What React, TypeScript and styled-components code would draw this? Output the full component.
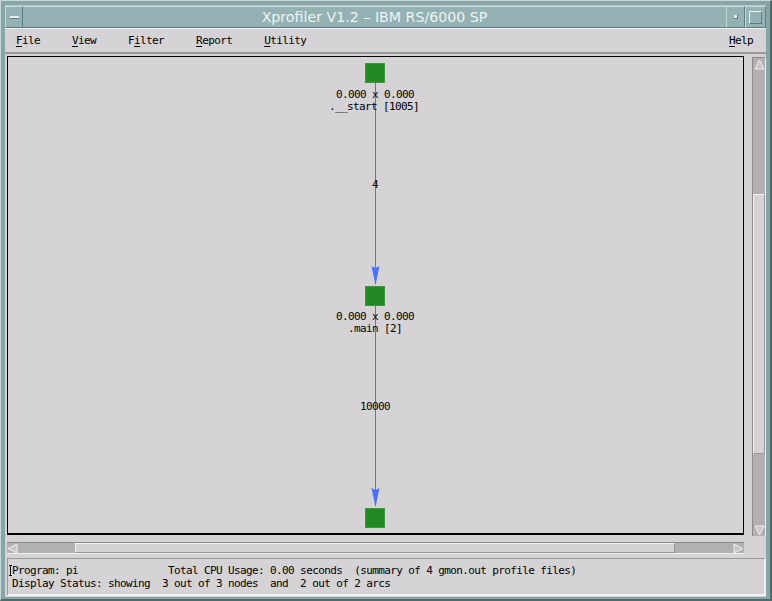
import React from "react";
import styled, { createGlobalStyle } from "styled-components";

const GlobalStyle = createGlobalStyle`
  html, body { margin: 0; padding: 0; background: #5d7b7c; }
  #root { width: 772px; height: 601px; }
`;

const BG = "#d6d3d6";
const DARK = "#b3b0b3";
const EDGE = "#4a70ff";
const MONO = `"DejaVu Sans Mono", "Liberation Mono", monospace`;

const Frame = styled.div`
  width: 772px;
  height: 601px;
  box-sizing: border-box;
  padding: 4px 4px 5px 4px;
  background: #87a5a6;
  border-top: 1px solid #c8d8d8;
  border-left: 1px solid #c8d8d8;
  border-right: 2px solid #4f6b6c;
  border-bottom: 2px solid #4f6b6c;
  display: flex;
  flex-direction: column;
  overflow: hidden;
`;

const TitleBar = styled.div`
  height: 23px;
  flex: none;
  display: flex;
  align-items: stretch;
  background: #94b2b3;
  border-top: 1px solid #b8cccc;
  box-sizing: border-box;
`;

const WinButton = styled.div<{ $w: number }>`
  width: ${(p) => p.$w}px;
  flex: none;
  box-sizing: border-box;
  border-top: 1px solid #c4d6d6;
  border-left: 1px solid #c4d6d6;
  border-right: 1px solid #5f7d7e;
  border-bottom: 1px solid #5f7d7e;
  display: flex;
  align-items: center;
  justify-content: center;
`;

const MenuDash = styled.div`
  width: 9px;
  height: 2px;
  background: #e6eeee;
  border-bottom: 1px solid #5f7d7e;
`;

const MinDot = styled.div`
  width: 3px;
  height: 3px;
  background: #e6eeee;
  border-right: 1px solid #5f7d7e;
  border-bottom: 1px solid #5f7d7e;
`;

const MaxBox = styled.div`
  width: 11px;
  height: 11px;
  border-top: 1px solid #e6eeee;
  border-left: 1px solid #e6eeee;
  border-right: 1px solid #5f7d7e;
  border-bottom: 1px solid #5f7d7e;
`;

const TitleText = styled.div`
  flex: 1;
  display: flex;
  align-items: center;
  justify-content: center;
  font-family: "DejaVu Sans", "Liberation Sans", sans-serif;
  font-size: 14.2px;
  color: #eef4f4;
  border-top: 1px solid #c4d6d6;
  border-bottom: 1px solid #5f7d7e;
  box-sizing: border-box;
`;

const Client = styled.div`
  flex: 1;
  background: ${BG};
  display: flex;
  flex-direction: column;
`;

const MenuBar = styled.div`
  height: 26px;
  flex: none;
  box-sizing: border-box;
  display: flex;
  align-items: center;
  gap: 32px;
  padding: 0 13px 1px 11px;
  border-top: 1px solid #f2f0f2;
  border-bottom: 2px solid #9a979a;
  font-family: ${MONO};
  font-size: 11px;
  letter-spacing: -0.62px;
  color: #000;
`;

const MenuItem = styled.span<{ $right?: boolean }>`
  margin-left: ${(p) => (p.$right ? "auto" : "0")};
  white-space: pre;
`;

const Mn = styled.span`
  text-decoration: underline;
  text-underline-offset: 2px;
`;

const Body = styled.div`
  flex: 1;
  display: grid;
  grid-template-columns: 737px 14px;
  grid-template-rows: 479px auto auto;
  column-gap: 8px;
  padding: 2px 2px 1px 2px;
`;

const Canvas = styled.div`
  position: relative;
  box-sizing: border-box;
  border: 1px solid #000;
  border-bottom-width: 2px;
  background: ${BG};
  overflow: hidden;
`;

const Edges = styled.svg`
  position: absolute;
  left: 0;
  top: 0;
`;

const NodeBox = styled.div<{ $x: number; $y: number }>`
  position: absolute;
  left: ${(p) => p.$x}px;
  top: ${(p) => p.$y}px;
  width: 20px;
  height: 20px;
  box-sizing: border-box;
  background: #238a23;
  border: 1px solid #3a9a3a;
`;

const Label = styled.div<{ $cx: number; $cy: number }>`
  position: absolute;
  left: ${(p) => p.$cx}px;
  top: ${(p) => p.$cy}px;
  transform: translate(-50%, -50%);
  white-space: pre;
  font-family: ${MONO};
  font-size: 11px;
  letter-spacing: -0.62px;
  line-height: 12px;
  color: #000;
`;

const VScroll = styled.div`
  box-sizing: border-box;
  margin-top: 1px;
  margin-bottom: -1px;
  display: flex;
  flex-direction: column;
  background: ${DARK};
  border-left: 1px solid #8d8a8d;
  border-top: 1px solid #8d8a8d;
  border-right: 1px solid #f0eef0;
`;

const HScroll = styled.div`
  margin-top: 7px;
  grid-column: 1;
  grid-row: 2;
  height: 12px;
  box-sizing: border-box;
  display: flex;
  background: ${DARK};
  border-top: 1px solid #8d8a8d;
  border-bottom: 1px solid #f0eef0;
`;

const ArrowBtn = styled.div<{ $size: number }>`
  width: ${(p) => p.$size}px;
  height: ${(p) => p.$size}px;
  flex: none;
  display: flex;
  align-items: center;
  justify-content: center;
`;

const Track = styled.div<{ $vertical?: boolean }>`
  flex: 1;
  display: flex;
  flex-direction: ${(p) => (p.$vertical ? "column" : "row")};
`;

const Gap = styled.div<{ $len: number; $vertical?: boolean }>`
  flex: none;
  ${(p) => (p.$vertical ? `height: ${p.$len}px;` : `width: ${p.$len}px;`)}
`;

const Thumb = styled.div<{ $len: number; $vertical?: boolean }>`
  flex: none;
  box-sizing: border-box;
  ${(p) => (p.$vertical ? `height: ${p.$len}px;` : `width: ${p.$len}px;`)}
  background: ${BG};
  border-top: 1px solid #f4f2f4;
  border-left: 1px solid #f4f2f4;
  border-right: 1px solid #9a979a;
  border-bottom: 1px solid #9a979a;
`;

const Status = styled.div`
  grid-column: 1 / span 2;
  grid-row: 3;
  margin-top: 4px;
  height: 38px;
  box-sizing: border-box;
  border-top: 1px solid #9a979a;
  border-left: 1px solid #9a979a;
  border-right: 2px solid #f2f0f2;
  border-bottom: 2px solid #f2f0f2;
  padding: 5px 4px 0 4px;
  font-family: ${MONO};
  font-size: 11px;
  letter-spacing: -0.62px;
  line-height: 13px;
  color: #000;
  white-space: pre;
  position: relative;
`;

const Caret = styled.span`
  position: absolute;
  left: 2px;
  top: 6px;
  width: 1px;
  height: 11px;
  background: #000;
  &::before, &::after {
    content: "";
    position: absolute;
    left: -1px;
    width: 3px;
    height: 1px;
    background: #000;
  }
  &::before { top: 0; }
  &::after { bottom: 0; }
`;

type Tri = "up" | "down" | "left" | "right";

function Triangle({ dir }: { dir: Tri }) {
  const pts: Record<Tri, string> = {
    up: "5.5,1 10,10 1,10",
    down: "1,1 10,1 5.5,10",
    left: "1,5.5 10,1 10,10",
    right: "1,1 10,5.5 1,10",
  };
  return (
    <svg width="11" height="11" viewBox="0 0 11 11">
      <polygon points={pts[dir]} fill="#c9c6c9" stroke="#f0eef0" strokeWidth="1" />
    </svg>
  );
}

const NODE_X = 357;
const CX = NODE_X + 10;

const nodes = [6, 229, 451];

function Arrow({ tip }: { tip: number }) {
  return (
    <polygon
      points={`${CX - 3.5},${tip - 19} ${CX + 0.5},${tip - 17} ${CX + 4.5},${tip - 19} ${CX + 0.5},${tip}`}
      fill={EDGE}
    />
  );
}

export default function App() {
  return (
    <>
      <GlobalStyle />
      <Frame>
        <TitleBar>
          <WinButton $w={18}>
            <MenuDash />
          </WinButton>
          <TitleText>Xprofiler V1.2 – IBM RS/6000 SP</TitleText>
          <WinButton $w={19}>
            <MinDot />
          </WinButton>
          <WinButton $w={21}>
            <MaxBox />
          </WinButton>
        </TitleBar>
        <Client>
          <MenuBar>
            <MenuItem><Mn>F</Mn>ile</MenuItem>
            <MenuItem><Mn>V</Mn>iew</MenuItem>
            <MenuItem>F<Mn>i</Mn>lter</MenuItem>
            <MenuItem><Mn>R</Mn>eport</MenuItem>
            <MenuItem><Mn>U</Mn>tility</MenuItem>
            <MenuItem $right><Mn>H</Mn>elp</MenuItem>
          </MenuBar>
          <Body>
            <Canvas>
              <Edges width="735" height="476">
                <rect x={CX} y={nodes[0] + 20} width="1" height={nodes[1] - nodes[0] - 22} fill={EDGE} />
                <Arrow tip={nodes[1] - 1} />
                <rect x={CX} y={nodes[1] + 20} width="1" height={nodes[2] - nodes[1] - 22} fill={EDGE} />
                <Arrow tip={nodes[2] - 1} />
              </Edges>
              {nodes.map((y) => (
                <NodeBox key={y} $x={NODE_X} $y={y} />
              ))}
              <Label $cx={CX} $cy={38}>0.000 x 0.000</Label>
              <Label $cx={CX - 1} $cy={50}>.__start [1005]</Label>
              <Label $cx={CX} $cy={128}>4</Label>
              <Label $cx={CX} $cy={260}>0.000 x 0.000</Label>
              <Label $cx={CX} $cy={272}>.main [2]</Label>
              <Label $cx={CX} $cy={350}>10000</Label>
            </Canvas>
            <VScroll>
              <ArrowBtn $size={12}><Triangle dir="up" /></ArrowBtn>
              <Track $vertical>
                <Gap $vertical $len={124} />
                <Thumb $vertical $len={260} />
              </Track>
              <ArrowBtn $size={12}><Triangle dir="down" /></ArrowBtn>
            </VScroll>
            <HScroll>
              <ArrowBtn $size={11}><Triangle dir="left" /></ArrowBtn>
              <Track>
                <Gap $len={57} />
                <Thumb $len={600} />
              </Track>
              <ArrowBtn $size={11}><Triangle dir="right" /></ArrowBtn>
            </HScroll>
            <Status>
              <Caret />
              {"Program: pi               Total CPU Usage: 0.00 seconds  (summary of 4 gmon.out profile files)\n"}
              {"Display Status: showing  3 out of 3 nodes  and  2 out of 2 arcs"}
            </Status>
          </Body>
        </Client>
      </Frame>
    </>
  );
}
